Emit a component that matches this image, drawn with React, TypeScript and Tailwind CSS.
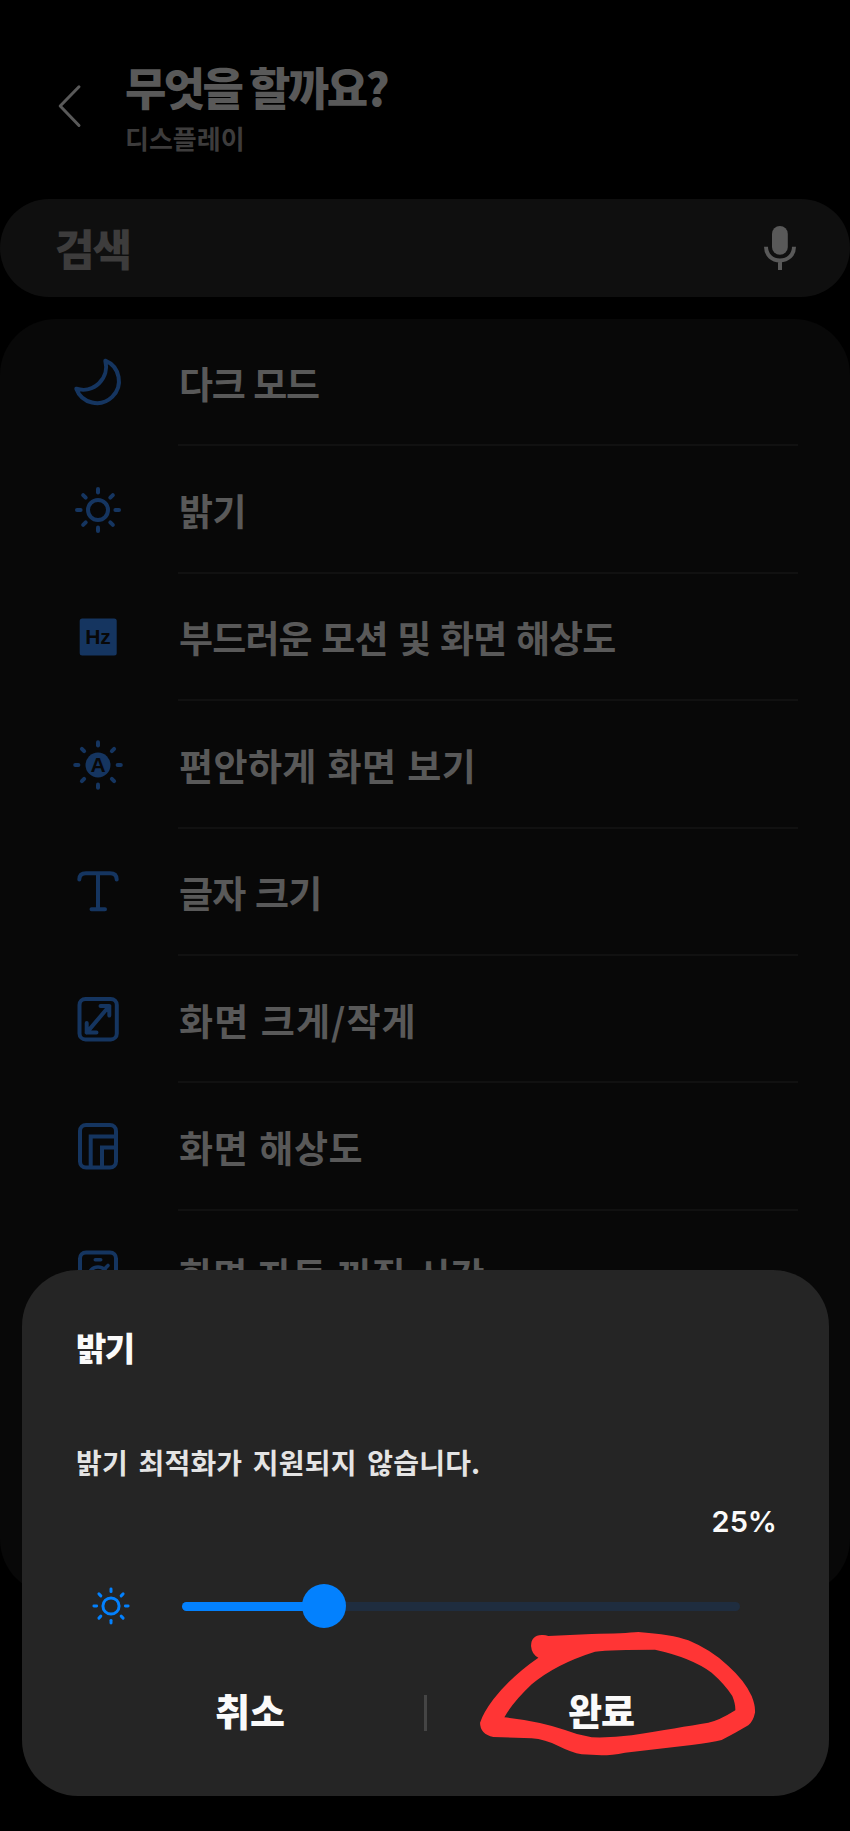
import type { ReactNode } from "react";

const RAYS = [0, 45, 90, 135, 180, 225, 270, 315];

function Icon({ children }: { children: ReactNode }) {
  return (
    <svg
      viewBox="0 0 56 56"
      className="h-14 w-14 shrink-0 text-[#153560]"
      fill="none"
      stroke="currentColor"
      strokeWidth="4"
      strokeLinecap="round"
      strokeLinejoin="round"
    >
      {children}
    </svg>
  );
}

function Rays({ from, to }: { from: number; to: number }) {
  return (
    <>
      {RAYS.map((a) => (
        <path key={a} d={`M28 ${28 - from}V${28 - to}`} transform={`rotate(${a} 28 28)`} />
      ))}
    </>
  );
}

const rows: { label: string; style: string; icon: ReactNode }[] = [
  {
    label: "다크 모드",
    style: "tracking-[-1.4px]",
    icon: <path d="M35.3 5.7A22 22 0 1 1 6.3 33.7A23 23 0 0 0 35.3 5.7Z" />,
  },
  {
    label: "밝기",
    style: "tracking-[-0.5px]",
    icon: (
      <>
        <circle cx="28" cy="28" r="10" />
        <Rays from={17.4} to={21} />
      </>
    ),
  },
  {
    label: "부드러운 모션 및 화면 해상도",
    style: "tracking-[-0.85px]",
    icon: (
      <>
        <rect x="9.7" y="9.5" width="37" height="37" rx="2.5" fill="currentColor" stroke="none" />
        <text
          x="28"
          y="35.3"
          textAnchor="middle"
          stroke="none"
          className="fill-[#080808] font-['Liberation_Sans'] text-[21px] font-bold"
        >
          Hz
        </text>
      </>
    ),
  },
  {
    label: "편안하게 화면 보기",
    style: "tracking-[0.4px]",
    icon: (
      <>
        <circle cx="28" cy="28" r="12.5" fill="currentColor" stroke="none" />
        <text
          x="28"
          y="35.2"
          textAnchor="middle"
          stroke="none"
          className="fill-[#080808] font-['Liberation_Sans'] text-[21px] font-bold"
        >
          A
        </text>
        <Rays from={19.6} to={22.8} />
      </>
    ),
  },
  {
    label: "글자 크기",
    style: "tracking-[-0.8px]",
    icon: <path d="M9.3 15.5C9.3 11 12 9.2 16 9.2H40C44 9.2 46.7 11 46.7 15.5M28 9.2V45.3M21.5 45.3H35" />,
  },
  {
    label: "화면 크게/작게",
    style: "tracking-[1.1px]",
    icon: (
      <>
        <rect x="9.5" y="7" width="37.3" height="40.4" rx="6" />
        <path d="M39.3 14L16.7 40.6M30.5 14H39.3V23.5M16.7 31V40.6H26.5" />
      </>
    ),
  },
  {
    label: "화면 해상도",
    style: "tracking-[0.6px]",
    icon: (
      <>
        <rect x="10" y="6" width="36" height="42.5" rx="6" />
        <path d="M20.7 48V17.6H46M32 48V28.4H46" strokeLinecap="butt" strokeLinejoin="miter" />
      </>
    ),
  },
  {
    label: "화면 자동 꺼짐 시간",
    style: "tracking-[0.2px]",
    icon: (
      <>
        <rect x="10" y="6.5" width="36" height="42.5" rx="6" />
        <path d="M25.3 13.8H30.7M35 22.5L38 19.5" strokeWidth="3.6" />
        <circle cx="28" cy="30.5" r="9.5" strokeWidth="3.6" />
      </>
    ),
  },
];

export default function App() {
  return (
    <div className="relative h-[1831px] w-[850px] overflow-hidden bg-black font-['Noto_Sans_CJK_KR',sans-serif] font-bold">
      <header className="flex h-[199px] pt-[60px] pl-[56px]">
        <svg
          viewBox="0 0 28 46"
          className="mt-[23px] h-[46px] w-[28px]"
          fill="none"
          stroke="#595959"
          strokeWidth="3"
          strokeLinecap="round"
          strokeLinejoin="round"
        >
          <path d="M23 3.8L4.2 23L23 42.5" />
        </svg>
        <div className="ml-[41px] whitespace-nowrap">
          <h1 className="h-[60px] text-[45px] leading-[53px] font-black tracking-[-2.6px] text-[#595959]">무엇을 할까요?</h1>
          <p className="text-[26px] leading-[36px] font-bold text-[#3d3c3c]">디스플레이</p>
        </div>
      </header>

      <div className="flex h-[98px] items-center justify-between rounded-full bg-[#0f0f0f] pr-[50px] pl-[55px]">
        <span className="pb-[2px] text-[43px] leading-none font-black tracking-[-2px] text-[#3d3c3c]">검색</span>
        <svg viewBox="0 0 40 48" className="h-[48px] w-[40px]" fill="none" stroke="#595959" strokeWidth="4">
          <rect x="12" y="2" width="15.8" height="28.8" rx="7.9" fill="#595959" stroke="none" />
          <path d="M6 22.8C6 31 12 36.4 20 36.4S34 31 34 22.8M20 36V46" />
        </svg>
      </div>

      <main className="mt-[22px] h-[1276px] overflow-hidden rounded-[56px] bg-[#080808]">
        {rows.map((r) => (
          <div key={r.label} className="flex h-[127.4px] items-center pl-[70px]">
            <Icon>{r.icon}</Icon>
            <div className="mr-[52px] ml-[52px] flex h-full grow items-center border-b-2 border-[#111111] whitespace-nowrap">
              <span className={`pt-[3px] pl-px text-[37px] leading-none [word-spacing:2px] text-[#595959] ${r.style}`}>
                {r.label}
              </span>
            </div>
          </div>
        ))}
      </main>

      <section className="absolute top-[1270px] left-[22px] flex h-[526px] w-[807px] flex-col rounded-[56px] bg-[#252525] px-[54px] pt-[55px] whitespace-nowrap">
        <h2 className="h-[110px] text-[33px] leading-[44px] font-black tracking-[-1.5px] text-[#fafafa]">밝기</h2>
        <p className="h-[60px] text-[28px] leading-[54px] font-bold tracking-[0.2px] [word-spacing:4px] text-[#e4e4e4]">
          밝기 최적화가 지원되지 않습니다.
        </p>
        <div className="flex h-[52px] items-center justify-end pr-0 font-['Inter'] text-[29px] leading-none font-semibold text-[#fafafa]">
          <span className="-mr-[2px]">25%</span>
        </div>
        <div className="mt-[36px] flex h-[46px] items-center">
          <svg
            viewBox="5 5 46 46"
            className="ml-[16px] h-[38px] w-[38px]"
            fill="none"
            stroke="#0381fe"
            strokeWidth="3.6"
            strokeLinecap="round"
          >
            <circle cx="28" cy="28" r="9.8" />
            <Rays from={17.4} to={20.7} />
          </svg>
          <div className="ml-[52px] flex h-[9px] w-[558px] items-center rounded-full bg-[#1f2d3f]">
            <div className="h-[9px] w-[142px] rounded-l-full bg-[#0381fe]" />
            <div className="-ml-[22px] h-[44px] w-[44px] shrink-0 rounded-full bg-[#0381fe]" />
          </div>
        </div>
        <div className="mt-[52px] flex h-[64px] items-center text-[38px] leading-none text-[#fafafa]">
          <button className="w-[348px] pb-[6px] text-center font-black">취소</button>
          <div className="h-[36px] w-[3px] bg-[#454545]" />
          <button className="w-[348px] pb-[6px] text-center text-[37px] font-black tracking-[-1px]">완료</button>
        </div>
        <svg viewBox="150 440 860 400" className="absolute top-[356px] left-[453px] h-[133.3px] w-[286.7px]">
          <path
            fill="#ff3535"
            fillRule="evenodd"
            d="M318 500Q318 468 350 467Q360 466 370 470L500 464Q600 462 640 458Q740 465 790 483Q860 512 910 560Q960 605 980 650Q992 680 990 700Q985 725 970 738Q930 762 890 782Q860 790 800 797L600 820Q560 828 530 828L470 825Q440 820 400 800Q360 780 320 777L205 773Q165 764 165 730Q175 700 205 660Q260 590 340 535Q320 525 318 500Z
               M238 714Q262 670 320 615Q390 555 510 517Q560 511 690 511Q800 535 860 580Q900 615 922 650Q932 675 931 693Q880 725 850 730Q760 745 620 768Q560 776 500 774Q460 768 420 752Q340 725 238 714Z"
          />
        </svg>
      </section>
    </div>
  );
}
